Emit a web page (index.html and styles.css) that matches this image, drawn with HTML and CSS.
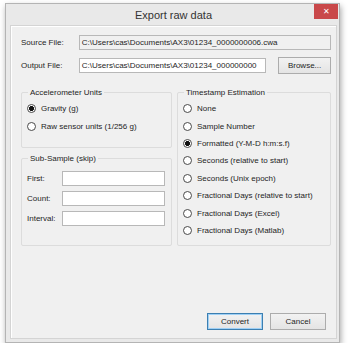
FILE: index.html
```html
<!DOCTYPE html>
<html lang="en">

<head>
    <meta charset="UTF-8">
    <title>Export raw data</title>
    <link rel="stylesheet" href="styles.css">
</head>

<body>
    <div class="window">
        <div class="titlebar">
            <span class="title">Export raw data</span>
            <span class="close">&#x2715;</span>
        </div>
        <div class="client">
            <div class="file-row">
                <span class="file-label">Source File:</span>
                <div class="textbox wide">C:\Users\cas\Documents\AX3\01234_0000000006.cwa</div>
            </div>
            <div class="file-row">
                <span class="file-label">Output File:</span>
                <div class="textbox narrow">C:\Users\cas\Documents\AX3\01234_000000000</div>
                <button class="btn browse">Browse...</button>
            </div>

            <div class="groups">
                <div class="col-left">
                    <div class="group units">
                        <span class="legend">Accelerometer Units</span>
                        <div class="radio checked">Gravity (g)</div>
                        <div class="radio">Raw sensor units (1/256 g)</div>
                    </div>
                    <div class="group subsample">
                        <span class="legend">Sub-Sample (skip)</span>
                        <div class="field"><span class="field-label">First:</span><div class="textbox small"></div></div>
                        <div class="field"><span class="field-label">Count:</span><div class="textbox small"></div></div>
                        <div class="field"><span class="field-label">Interval:</span><div class="textbox small"></div></div>
                    </div>
                </div>
                <div class="group timestamp">
                    <span class="legend">Timestamp Estimation</span>
                    <div class="radio">None</div>
                    <div class="radio">Sample Number</div>
                    <div class="radio checked">Formatted (Y-M-D h:m:s.f)</div>
                    <div class="radio">Seconds (relative to start)</div>
                    <div class="radio">Seconds (Unix epoch)</div>
                    <div class="radio">Fractional Days (relative to start)</div>
                    <div class="radio">Fractional Days (Excel)</div>
                    <div class="radio">Fractional Days (Matlab)</div>
                </div>
            </div>

            <div class="actions">
                <button class="btn default">Convert</button>
                <button class="btn">Cancel</button>
            </div>
        </div>
    </div>
</body>

</html>
```

FILE: styles.css
```css
body {
    margin: 0;
    background-color: #ffffff;
    font-family: "Liberation Sans", Arial, sans-serif;
    font-size: 8px;
    color: #1e1e1e;
}

.window {
    margin: 3px 0 0 5px;
    width: 335px;
    height: 340px;
    box-sizing: border-box;
    background-color: #e9e9e9;
    border: 1px solid #b4b4b4;
    box-shadow: 1px 3px 6px rgba(0, 0, 0, 0.35);
    display: flex;
    flex-direction: column;
    padding: 0 2px 3px 4px;
}

.titlebar {
    height: 21px;
    display: flex;
    justify-content: center;
    align-items: center;
    position: relative;
}

.title {
    font-size: 11px;
    color: #333;
}

.close {
    position: absolute;
    right: -1px;
    top: 0;
    width: 24px;
    height: 15px;
    background-color: #c9484a;
    color: #fff;
    font-size: 8px;
    display: flex;
    align-items: center;
    justify-content: center;
}

.client {
    flex: 1;
    background-color: #f0f0f0;
    border: 1px solid #d4d4d4;
    box-shadow: inset 1px 1px 0 #fff;
    padding: 8px 5px 8px 10px;
    display: flex;
    flex-direction: column;
}

.file-row {
    display: flex;
    align-items: center;
    height: 17px;
    margin-bottom: 6px;
}

.file-label {
    width: 58px;
}

.textbox {
    height: 15px;
    box-sizing: border-box;
    background-color: #fff;
    border: 1px solid #b8b8b8;
    padding: 0 2px;
    line-height: 13px;
    white-space: nowrap;
    overflow: hidden;
}

.wide {
    width: 253px;
    background-color: #f0f0f0;
}

.narrow {
    width: 188px;
}

.btn {
    font-family: inherit;
    font-size: 8px;
    color: #1e1e1e;
    height: 17px;
    width: 56px;
    padding: 0;
    background: linear-gradient(#f2f2f2, #e4e4e4);
    border: 1px solid #acacac;
    border-radius: 0;
}

.browse {
    margin-left: 12px;
    width: 53px;
}

.default {
    border-color: #3c7fb1;
    box-shadow: inset 0 0 0 1px #9fd0f5;
}

.groups {
    display: flex;
    gap: 5px;
    margin-top: 12px;
}

.col-left {
    display: flex;
    flex-direction: column;
    gap: 10px;
}

.group {
    position: relative;
    border: 1px solid #dcdcdc;
    border-radius: 2px;
    box-sizing: border-box;
    padding: 7px 6px 0 5px;
}

.legend {
    position: absolute;
    top: -6px;
    left: 6px;
    padding: 0 2px;
    background-color: #f0f0f0;
    line-height: 11px;
}

.units {
    width: 151px;
    height: 56px;
}

.subsample {
    width: 151px;
    height: 88px;
    padding-top: 12px;
}

.timestamp {
    width: 156px;
    height: 154px;
}

.radio {
    display: flex;
    align-items: center;
    height: 17.4px;
}

.radio::before {
    content: "";
    width: 9px;
    height: 9px;
    margin-right: 5px;
    box-sizing: border-box;
    border: 1px solid #4a4a4a;
    border-radius: 50%;
    background-color: #fff;
}

.radio.checked::before {
    background: radial-gradient(circle, #111 0 2.2px, #fff 2.8px);
}

.field {
    display: flex;
    align-items: center;
    height: 15px;
    margin-bottom: 5px;
}

.field-label {
    width: 36px;
}

.small {
    width: 104px;
}

.actions {
    margin-top: auto;
    display: flex;
    justify-content: flex-end;
    gap: 7px;
    padding-right: 5px;
}
```
